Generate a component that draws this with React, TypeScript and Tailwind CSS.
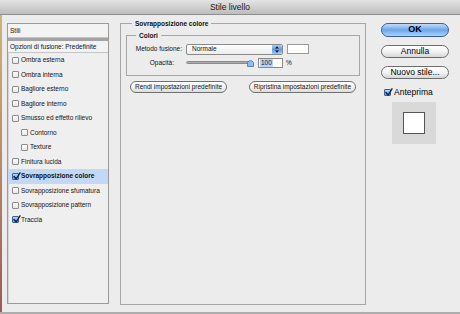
import React from 'react';

const font = "font-['Liberation_Sans',Arial,sans-serif]";

function Check({ checked }: { checked?: boolean }) {
  if (checked) {
    return (
      <span className="relative inline-block w-[7px] h-[7px] shrink-0 rounded-[1px] border border-[#3f5f95] bg-gradient-to-b from-[#b9d6f7] to-[#5f97dc]">
        <svg className="absolute -top-[2px] left-0" width="8" height="8" viewBox="0 0 8 8">
          <path d="M1 4.5 L3.2 7 L7 0.8" fill="none" stroke="#10234a" strokeWidth="1.4" strokeLinecap="round" strokeLinejoin="round" />
        </svg>
      </span>
    );
  }
  return <span className="inline-block w-[7px] h-[7px] shrink-0 rounded-[1px] border border-[#8c8c8c] bg-gradient-to-b from-white to-[#e6e6e6]" />;
}

const rows: { label: string; checked?: boolean; indent?: boolean; selected?: boolean }[] = [
  { label: 'Ombra esterna' },
  { label: 'Ombra interna' },
  { label: 'Bagliore esterno' },
  { label: 'Bagliore interno' },
  { label: 'Smusso ed effetto rilievo' },
  { label: 'Contorno', indent: true },
  { label: 'Texture', indent: true },
  { label: 'Finitura lucida' },
  { label: 'Sovrapposizione colore', checked: true, selected: true },
  { label: 'Sovrapposizione sfumatura' },
  { label: 'Sovrapposizione pattern' },
  { label: 'Traccia', checked: true },
];

function PillButton({ children }: { children: React.ReactNode }) {
  return (
    <div className="h-[12px] px-[4px] flex items-center justify-center rounded-full border border-[#707070] bg-gradient-to-b from-white via-[#f4f4f4] to-[#dcdcdc] text-[6.5px] text-[#111] whitespace-nowrap">
      {children}
    </div>
  );
}

function SideButton({ children, primary }: { children: React.ReactNode; primary?: boolean }) {
  return (
    <div
      className={
        primary
          ? 'h-[14px] w-[68px] flex items-center justify-center rounded-full border border-[#3c5f9a] bg-gradient-to-b from-[#c4dcf8] via-[#6aa6ea] to-[#a9d4ff] text-[9px] font-bold text-black'
          : 'h-[13px] w-[68px] flex items-center justify-center rounded-full border border-[#6e6e6e] bg-gradient-to-b from-white via-[#f3f3f3] to-[#d6d6d6] text-[8.5px] text-black'
      }
    >
      {children}
    </div>
  );
}

export default function App() {
  return (
    <div className={`w-[460px] h-[314px] flex flex-col bg-[#ececec] overflow-hidden ${font}`}>
      {/* Title bar */}
      <div className="h-[15px] shrink-0 flex items-center justify-center bg-gradient-to-b from-[#e4e4e4] to-[#bdbdbd] border-b border-[#8e8e8e] text-[8.5px] text-[#1a1a1a]">
        Stile livello
      </div>

      <div className="flex flex-1">
        {/* window edge strip */}
        <div className="w-[2px] bg-gradient-to-b from-[#cdb57a] via-[#b48a6a] to-[#9a5a5a]" />

        {/* Left styles list */}
        <div className="ml-[5px] mt-[8px] w-[102px] h-[281px] border border-[#9a9a9a] shadow-[inset_1px_1px_0_#d6d6d6] bg-[#efefef] flex flex-col">
          <div className="h-[14px] flex items-center pl-[2px] text-[6.5px] text-[#111] border-b border-[#c4c4c4] bg-[#f3f3f3]">Stili</div>
          <div className="h-[3px] bg-[#a3a3a3]" />
          <div className="h-[12px] flex items-center pl-[2px] text-[6.5px] text-[#111] border-b border-[#c4c4c4] bg-[#f3f3f3]">
            Opzioni di fusione: Predefinite
          </div>
          {rows.map((r) => (
            <div
              key={r.label}
              className={`h-[14.5px] flex items-center gap-[2px] text-[6.5px] text-[#111] ${r.indent ? 'pl-[13px]' : 'pl-[4px]'} ${r.selected ? 'bg-[#c2d8f4] font-bold' : ''}`}
            >
              <Check checked={r.checked} />
              <span>{r.label}</span>
            </div>
          ))}
        </div>

        {/* Main group */}
        <fieldset className="ml-[11px] mt-[4px] w-[246px] h-[286px] border border-[#a6a6a6] px-[5px]">
          <legend className="ml-[6px] px-[3px] text-[6.5px] font-bold text-[#111]">Sovrapposizione colore</legend>

          <fieldset className="mt-[2px] h-[45px] border border-[#a6a6a6]">
            <legend className="ml-[9px] px-[3px] text-[6.5px] font-bold text-[#111]">Colori</legend>
            <div className="flex items-center mt-[3px]">
              <div className="w-[55px] text-right text-[6.5px] text-[#111]">Metodo fusione:</div>
              <div className="ml-[4px] w-[97px] h-[11px] flex items-center rounded-[2px] border border-[#8a8a8a] bg-gradient-to-b from-white to-[#ececec]">
                <span className="pl-[5px] flex-1 text-[6.5px] text-[#111]">Normale</span>
                <span className="w-[10px] h-[9px] flex items-center justify-center rounded-r-[2px] bg-gradient-to-b from-[#a9cdf6] via-[#5c9be4] to-[#9fcdfb]">
                  <svg width="4" height="7" viewBox="0 0 4 7">
                    <path d="M0 2.6 L2 0.3 L4 2.6 Z M0 4.4 L2 6.7 L4 4.4 Z" fill="#111" />
                  </svg>
                </span>
              </div>
              <div className="ml-[4px] w-[22px] h-[10px] bg-white border border-[#9a9a9a]" />
            </div>
            <div className="flex items-center mt-[3px]">
              <div className="w-[47px] text-right text-[6.5px] text-[#111]">Opacità:</div>
              <div className="ml-[12px] relative w-[68px] h-[8px] flex items-center">
                <div className="w-[64px] h-[3px] rounded-full bg-gradient-to-b from-[#8a8a8a] to-[#cfcfcf] border border-[#8a8a8a]" />
                <svg className="absolute right-0 top-[0px]" width="7" height="8" viewBox="0 0 7 8">
                  <path d="M0.5 7.5 L0.5 3.5 Q3.5 -0.5 6.5 3.5 L6.5 7.5 Z" fill="#8fbcf0" stroke="#4a6fa5" strokeWidth="0.8" />
                </svg>
              </div>
              <div className="ml-[4px] w-[25px] h-[10px] flex items-center bg-white border border-[#8a8a8a]">
                <span className="ml-[1px] px-[1px] bg-[#b5d5ff] text-[6.5px] text-[#111] leading-[8px]">100</span>
              </div>
              <span className="ml-[3px] text-[6.5px] text-[#111]">%</span>
            </div>
          </fieldset>

          <div className="mt-[5px] flex items-center justify-between px-[4px]">
            <PillButton>Rendi impostazioni predefinite</PillButton>
            <PillButton>Ripristina impostazioni predefinite</PillButton>
          </div>
        </fieldset>

        {/* Right column */}
        <div className="ml-[15px] mt-[8px] flex flex-col items-start">
          <SideButton primary>OK</SideButton>
          <div className="mt-[8px]">
            <SideButton>Annulla</SideButton>
          </div>
          <div className="mt-[8px]">
            <SideButton>Nuovo stile...</SideButton>
          </div>
          <div className="mt-[7px] ml-[3px] flex items-center gap-[3px] text-[8.5px] text-black">
            <Check checked />
            <span>Anteprima</span>
          </div>
          <div className="mt-[3px] ml-[11px] w-[44px] h-[42px] bg-[#d9d9d9] flex items-center justify-center">
            <div className="w-[22px] h-[22px] bg-white border border-[#555]" />
          </div>
        </div>
      </div>

      <div className="h-[2px] shrink-0 bg-[#adadad]" />
    </div>
  );
}
